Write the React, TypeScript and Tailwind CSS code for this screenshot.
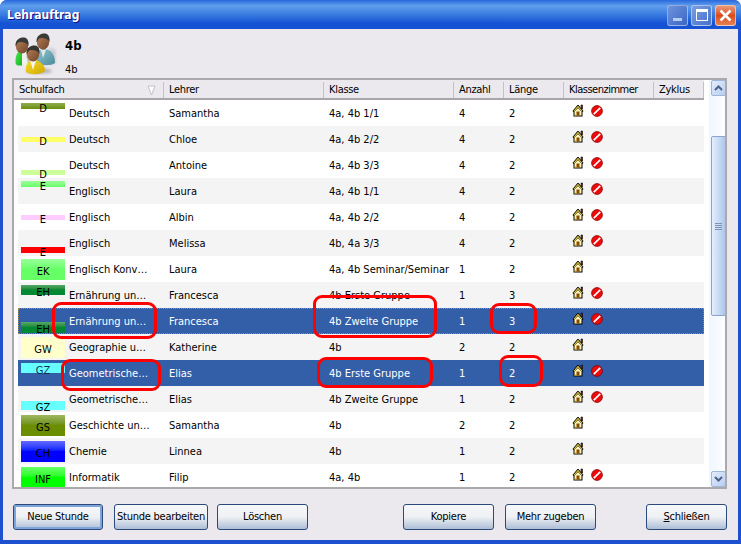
import React from "react";

const FONT = "font-['DejaVu_Sans_Condensed','Noto_Sans',sans-serif]";

const House = () => (
  <svg width="12" height="13" viewBox="0 0 12 13" className="shrink-0">
    <path d="M9 1 H10.5 V5 H9 Z" fill="#d01010" stroke="#000" strokeWidth="0.6" />
    <path d="M0.5 7 L5.5 1 L6.5 1 L11.5 7 L10.5 8 L10.5 12.5 L1.5 12.5 L1.5 8 Z" fill="#000" />
    <path d="M1.5 7 L6 1.8 L10.5 7 L9.5 7 L6 3.2 L2.5 7 Z" fill="#ffe23c" />
    <path d="M2.5 7.5 L6 4 L9.5 7.5 V11.5 H2.5 Z" fill="#fff6b8" />
    <rect x="4.5" y="7.5" width="3" height="4" fill="#8a4a00" />
    <rect x="2.5" y="10.5" width="2" height="1" fill="#e0b000" />
  </svg>
);
const NoEntry = () => (
  <svg width="12" height="12" viewBox="0 0 12 12" className="shrink-0 mt-px">
    <circle cx="6" cy="6" r="5.4" fill="#ee0a0a" stroke="#8a0000" strokeWidth="0.8" />
    <path d="M2.8 9.2 L9.2 2.8" stroke="#fff" strokeWidth="1.7" />
  </svg>
);

const People = () => (
  <svg width="42" height="42" viewBox="0 0 42 42">
    <defs>
      <filter id="soft" x="-20%" y="-20%" width="140%" height="140%"><feGaussianBlur stdDeviation="0.5" /></filter>
      <filter id="softer" x="-30%" y="-60%" width="160%" height="220%"><feGaussianBlur stdDeviation="1.6" /></filter>
      <linearGradient id="skin" x1="0" x2="1" y1="0" y2="1"><stop offset="0" stopColor="#b98058" /><stop offset="1" stopColor="#70452a" /></linearGradient>
      <linearGradient id="teal" x1="0" x2="1" y1="0" y2="1"><stop offset="0" stopColor="#8fc4cf" /><stop offset="1" stopColor="#4c8c9c" /></linearGradient>
      <linearGradient id="yel" x1="0" x2="1" y1="0" y2="1"><stop offset="0" stopColor="#f8dc30" /><stop offset="1" stopColor="#d0a800" /></linearGradient>
      <linearGradient id="grn" x1="0" x2="1" y1="0" y2="1"><stop offset="0" stopColor="#50e850" /><stop offset="1" stopColor="#10b020" /></linearGradient>
    </defs>
    <ellipse cx="24" cy="38" rx="13" ry="3" fill="#b8b6ba" filter="url(#softer)" />
    <path d="M34 14 L41 17 L41 30 L34 32 Z" fill="#cfcdd1" filter="url(#softer)" />
    <g filter="url(#soft)">
      <path d="M22 30 C22 20 25 16 28 16 C35 16 40 20 40 30 C36 33 26 33 22 30 Z" fill="url(#teal)" />
      <path d="M26 17 L31 17 L28 25 Z" fill="#dde8e8" />
      <ellipse cx="28" cy="9" rx="6.2" ry="7.6" fill="url(#skin)" />
      <path d="M21.5 9 C21 2 27 0 30 0.5 C34 1 35 5 34.5 9 C33 5 26 4 23.5 6 C22.8 7 22.5 9 21.5 9 Z" fill="#3a3a36" />
      <path d="M0.5 30 C0 22 3 17 8 17 L8 32 C5 33 1 33 0.5 30 Z" fill="url(#grn)" />
      <path d="M7 17 C14 17 17 21 18 27 L12 33 L7 32 Z" fill="#f0f0ec" />
      <path d="M11 21 C14 22 16 24 17 28 L13 32 Z" fill="#c8c8c4" />
      <ellipse cx="7" cy="13" rx="6.2" ry="7.6" fill="url(#skin)" />
      <path d="M0.5 13 C0 6 6 4 9 4.5 C13 5 14 9 13.5 13 C12 9 5 8 2.5 10 C1.8 11 1.5 13 0.5 13 Z" fill="#383834" />
      <path d="M11 39 C10 32 13 27 18 27 C24 27 30 31 30 38 C26 42 15 42 11 39 Z" fill="url(#yel)" />
      <path d="M15 27.5 L21 27.5 L18 37 Z" fill="#f6f6f0" />
      <ellipse cx="18" cy="21" rx="6.2" ry="7.6" fill="url(#skin)" />
      <path d="M11.5 21 C11 14 17 12 20 12.5 C24 13 25 17 24.5 21 C23 17 16 16 13.5 18 C12.8 19 12.5 21 11.5 21 Z" fill="#343430" />
    </g>
  </svg>
);

type Row = {
  subject: string; chip: string; label: string; bar: string; labelPos: string;
  teacher: string; klass: string; n: string; len: string; block: boolean; sel?: boolean; focus?: boolean;
};

const rows: Row[] = [
  { subject: "Deutsch", chip: "D", label: "text-black", bar: "mt-[3px] h-[6px] bg-gradient-to-b from-[#8fae4c] to-[#6b8e00]", labelPos: "top-[2px]", teacher: "Samantha", klass: "4a, 4b 1/1", n: "4", len: "2", block: true },
  { subject: "Deutsch", chip: "D", label: "text-black", bar: "mt-[11px] h-[5px] bg-[#ffff66]", labelPos: "top-[9px]", teacher: "Chloe", klass: "4a, 4b 2/2", n: "4", len: "2", block: true },
  { subject: "Deutsch", chip: "D", label: "text-black", bar: "mt-[18px] h-[5px] bg-[#ccff99]", labelPos: "top-[16px]", teacher: "Antoine", klass: "4a, 4b 3/3", n: "4", len: "2", block: true },
  { subject: "Englisch", chip: "E", label: "text-black", bar: "mt-[3px] h-[6px] bg-gradient-to-b from-[#99ff99] to-[#66ff66]", labelPos: "top-[2px]", teacher: "Laura", klass: "4a, 4b 1/1", n: "4", len: "2", block: true },
  { subject: "Englisch", chip: "E", label: "text-black", bar: "mt-[11px] h-[5px] bg-[#ffccff]", labelPos: "top-[9px]", teacher: "Albin", klass: "4a, 4b 2/2", n: "4", len: "2", block: true },
  { subject: "Englisch", chip: "E", label: "text-black", bar: "mt-[17px] h-[6px] bg-[#ff0000]", labelPos: "top-[16px]", teacher: "Melissa", klass: "4b, 4a 3/3", n: "4", len: "2", block: true },
  { subject: "Englisch Konv…", chip: "EK", label: "text-black", bar: "mt-[3px] h-[21px] bg-gradient-to-b from-[#99ff99] via-[#66ff66] to-[#66ff66]", labelPos: "top-[9px]", teacher: "Laura", klass: "4a, 4b Seminar/Seminar", n: "1", len: "2", block: false },
  { subject: "Ernährung un…", chip: "EH", label: "text-black", bar: "mt-[3px] h-[10px] bg-gradient-to-b from-[#55aa66] via-[#008833] to-[#008833]", labelPos: "top-[4px]", teacher: "Francesca", klass: "4b Erste Gruppe", n: "1", len: "3", block: true },
  { subject: "Ernährung un…", chip: "EH", label: "text-black", bar: "mt-[14px] h-[11px] bg-gradient-to-b from-[#55aa66] via-[#008833] to-[#008833]", labelPos: "top-[15px]", teacher: "Francesca", klass: "4b Zweite Gruppe", n: "1", len: "3", block: true, sel: true, focus: true },
  { subject: "Geographie u…", chip: "GW", label: "text-black", bar: "mt-[3px] h-[21px] bg-[#ffffcc]", labelPos: "top-[9px]", teacher: "Katherine", klass: "4b", n: "2", len: "2", block: false },
  { subject: "Geometrische…", chip: "GZ", label: "text-[#10305a]", bar: "mt-[3px] h-[10px] bg-[#66ffff]", labelPos: "top-[4px]", teacher: "Elias", klass: "4b Erste Gruppe", n: "1", len: "2", block: true, sel: true },
  { subject: "Geometrische…", chip: "GZ", label: "text-black", bar: "mt-[15px] h-[9px] bg-[#66ffff]", labelPos: "top-[15px]", teacher: "Elias", klass: "4b Zweite Gruppe", n: "1", len: "2", block: true },
  { subject: "Geschichte un…", chip: "GS", label: "text-black", bar: "mt-[3px] h-[21px] bg-gradient-to-b from-[#a0b860] via-[#6b8e00] to-[#6b8e00]", labelPos: "top-[9px]", teacher: "Samantha", klass: "4b", n: "2", len: "2", block: false },
  { subject: "Chemie", chip: "CH", label: "text-black", bar: "mt-[3px] h-[21px] bg-gradient-to-b from-[#6666ff] via-[#0000ff] to-[#0000ff]", labelPos: "top-[9px]", teacher: "Linnea", klass: "4b", n: "1", len: "2", block: false },
  { subject: "Informatik", chip: "INF", label: "text-black", bar: "mt-[3px] h-[21px] bg-gradient-to-b from-[#66ff66] via-[#00ff00] to-[#00ff00]", labelPos: "top-[9px]", teacher: "Filip", klass: "4a, 4b", n: "1", len: "2", block: true },
];

const Head = ({ w, children }: { w: string; children: React.ReactNode }) => (
  <div className={`${w} flex items-center justify-between pl-[5px] pr-[3px] border-r border-[#c4c2c6] h-full`}>{children}</div>
);

const Btn = ({ w, children, primary }: { w: string; children: React.ReactNode; primary?: boolean }) => (
  <div className={`${w} h-[26px] rounded-[3px] border border-[#2a4a7c] bg-gradient-to-b from-[#f6f8fb] via-[#eef0f4] to-[#adbed6] flex items-center justify-center whitespace-nowrap text-[11px] tracking-[-0.25px] text-black ${primary ? "shadow-[inset_0_0_0_2px_#7fa4dc]" : ""}`}>
    {children}
  </div>
);

const Mark = ({ pos }: { pos: string }) => (
  <div className={`absolute ${pos} rounded-[9px] border-[3px] border-[#ff0000]`} />
);

export default function App() {
  return (
    <div className={`relative w-[741px] h-[544px] flex flex-col overflow-hidden rounded-t-[7px] bg-[#1c50cf] ${FONT}`}>
      <div className="h-[29px] shrink-0 flex items-center justify-between pl-[7px] pr-[5px] bg-gradient-to-b from-[#2a66dd] from-0% via-[#5f9fec] via-20% to-[#1553d4] to-80%">
        <span className="text-[12px] font-bold text-white mt-px [text-shadow:1px_1px_0_#0f1089]">Lehrauftrag</span>
        <div className="flex items-center gap-[3px] mt-[1px]">
          <div className="w-[21px] h-[21px] rounded-[3px] border border-white/40 bg-gradient-to-br from-[#6f94dc] to-[#3a65c4] flex items-end pb-[4px] pl-[5px]">
            <div className="w-[9px] h-[3px] bg-[#b4ccf0]" />
          </div>
          <div className="w-[21px] h-[21px] rounded-[3px] border border-white/50 bg-gradient-to-br from-[#7a9ede] to-[#4470cc] flex items-center justify-center">
            <div className="w-[12px] h-[12px] border border-white border-t-[3px]" />
          </div>
          <div className="w-[21px] h-[21px] rounded-[3px] border border-white/50 bg-gradient-to-b from-[#e89878] via-[#d84c1c] to-[#e88050] flex items-center justify-center">
            <svg width="13" height="13" viewBox="0 0 13 13"><path d="M1.5 1.5 L11.5 11.5 M11.5 1.5 L1.5 11.5" stroke="#fff" strokeWidth="2.6" /></svg>
          </div>
        </div>
      </div>

      <div className="flex-1 mx-[3px] mb-[4px] bg-[#ebe9ed] flex flex-col pl-[9px] pr-[11px] min-h-0">
        <div className="h-[49px] shrink-0 flex">
          <div className="w-[53px] pt-[4px] pl-[3px] shrink-0"><People /></div>
          <div className="flex flex-col pt-[7px] text-black">
            <span className="text-[13px] font-bold leading-[20px]">4b</span>
            <span className="text-[11px] leading-[13px] mt-[7px]">4b</span>
          </div>
        </div>

        <div className="h-[411px] shrink-0 border-2 border-[#aca9ac] bg-white flex overflow-hidden">
          <div className="w-[695px] shrink-0 flex flex-col">
            <div className="w-[690px] h-[20px] pt-[2px] shrink-0 flex bg-[#ebe9ed] border-b-2 border-[#a8a6aa] text-[11px] tracking-[-0.3px] text-black">
              <Head w="w-[150px]"><span>Schulfach</span>
                <svg width="9" height="11" viewBox="0 0 9 11" className="mr-[4px]"><path d="M1 1 H8 L4.5 10 Z" fill="#fff" stroke="#c0bec2" /></svg>
              </Head>
              <Head w="w-[160px]">Lehrer</Head>
              <Head w="w-[130px]">Klasse</Head>
              <Head w="w-[50px]">Anzahl</Head>
              <Head w="w-[60px]">Länge</Head>
              <Head w="w-[90px]"><span className="tracking-[-0.5px]">Klassenzimmer</span></Head>
              <Head w="w-[50px]">Zyklus</Head>
            </div>
            <div className="flex-1 min-h-0 overflow-hidden pl-[4px] pr-[5px]">
              {rows.map((r, i) => (
                <div
                  key={i}
                  className={`h-[26px] flex text-[11px] relative ${r.sel ? "bg-[#335ea8] text-white" : i % 2 === 1 ? "bg-[#f4f4f4] text-black" : "bg-white text-black"} ${r.focus ? "outline-1 outline-dotted outline-[#b08a3c] -outline-offset-1" : ""}`}
                >
                  <div className="w-[146px] flex shrink-0">
                    <div className="relative w-[44px] h-[26px] ml-[3px] shrink-0">
                      <div className={r.bar} />
                      <div className={`absolute left-0 right-0 text-center leading-[13px] ${r.labelPos} ${r.label}`}>{r.chip}</div>
                    </div>
                    <div className="ml-[4px] leading-[28px]">{r.subject}</div>
                  </div>
                  <div className="w-[160px] shrink-0 pl-[5px] leading-[28px]">{r.teacher}</div>
                  <div className="w-[130px] shrink-0 pl-[5px] leading-[28px]">{r.klass}</div>
                  <div className="w-[50px] shrink-0 pl-[5px] leading-[28px]">{r.n}</div>
                  <div className="w-[60px] shrink-0 pl-[5px] leading-[28px]">{r.len}</div>
                  <div className="w-[90px] shrink-0 pl-[8px] pt-[4px] flex gap-[7px] items-start">
                    <House />
                    {r.block && <NoEntry />}
                  </div>
                </div>
              ))}
            </div>
          </div>
          <div className="w-[18px] shrink-0 flex flex-col items-center bg-gradient-to-r from-[#f0f6ff] to-[#fdfeff]">
            <div className="w-[15px] h-[16px] rounded-[2px] border border-[#9db6dc] bg-gradient-to-br from-[#e4ecfc] to-[#b8cef0] flex items-center justify-center">
              <svg width="9" height="6" viewBox="0 0 9 6"><path d="M1 5 L4.5 1.5 L8 5" stroke="#4d6185" strokeWidth="2" fill="none" /></svg>
            </div>
            <div className="w-[15px] h-[180px] mt-[40px] rounded-[2px] border border-[#8aa4cc] bg-gradient-to-r from-[#e4eefd] to-[#afc7ec] flex flex-col items-center justify-center gap-[1px]">
              <div className="w-[7px] h-px bg-[#7f93b5]" />
              <div className="w-[7px] h-px bg-[#7f93b5]" />
              <div className="w-[7px] h-px bg-[#7f93b5]" />
              <div className="w-[7px] h-px bg-[#7f93b5]" />
            </div>
            <div className="flex-1" />
            <div className="w-[15px] h-[16px] rounded-[2px] border border-[#9db6dc] bg-gradient-to-br from-[#e4ecfc] to-[#b8cef0] flex items-center justify-center">
              <svg width="9" height="6" viewBox="0 0 9 6"><path d="M1 1 L4.5 4.5 L8 1" stroke="#4d6185" strokeWidth="2" fill="none" /></svg>
            </div>
          </div>
        </div>

        <div className="flex-1 flex pt-[15px] items-start">
          <Btn w="w-[90px] ml-[1px]" primary>Neue Stunde</Btn>
          <Btn w="w-[94px] ml-[11px]">Stunde bearbeiten</Btn>
          <Btn w="w-[91px] ml-[9px]">Löschen</Btn>
          <Btn w="w-[91px] ml-[95px]">Kopiere</Btn>
          <Btn w="w-[91px] ml-[11px]">Mehr zugeben</Btn>
          <Btn w="w-[81px] ml-[50px]"><span><span className="underline">S</span>chließen</span></Btn>
        </div>
      </div>

      <Mark pos="left-[52px] top-[302px] w-[105px] h-[37px]" />
      <Mark pos="left-[313px] top-[295px] w-[124px] h-[43px]" />
      <Mark pos="left-[490px] top-[303px] w-[47px] h-[31px]" />
      <Mark pos="left-[61px] top-[359px] w-[100px] h-[32px]" />
      <Mark pos="left-[317px] top-[357px] w-[116px] h-[31px]" />
      <Mark pos="left-[499px] top-[355px] w-[44px] h-[32px]" />
    </div>
  );
}
